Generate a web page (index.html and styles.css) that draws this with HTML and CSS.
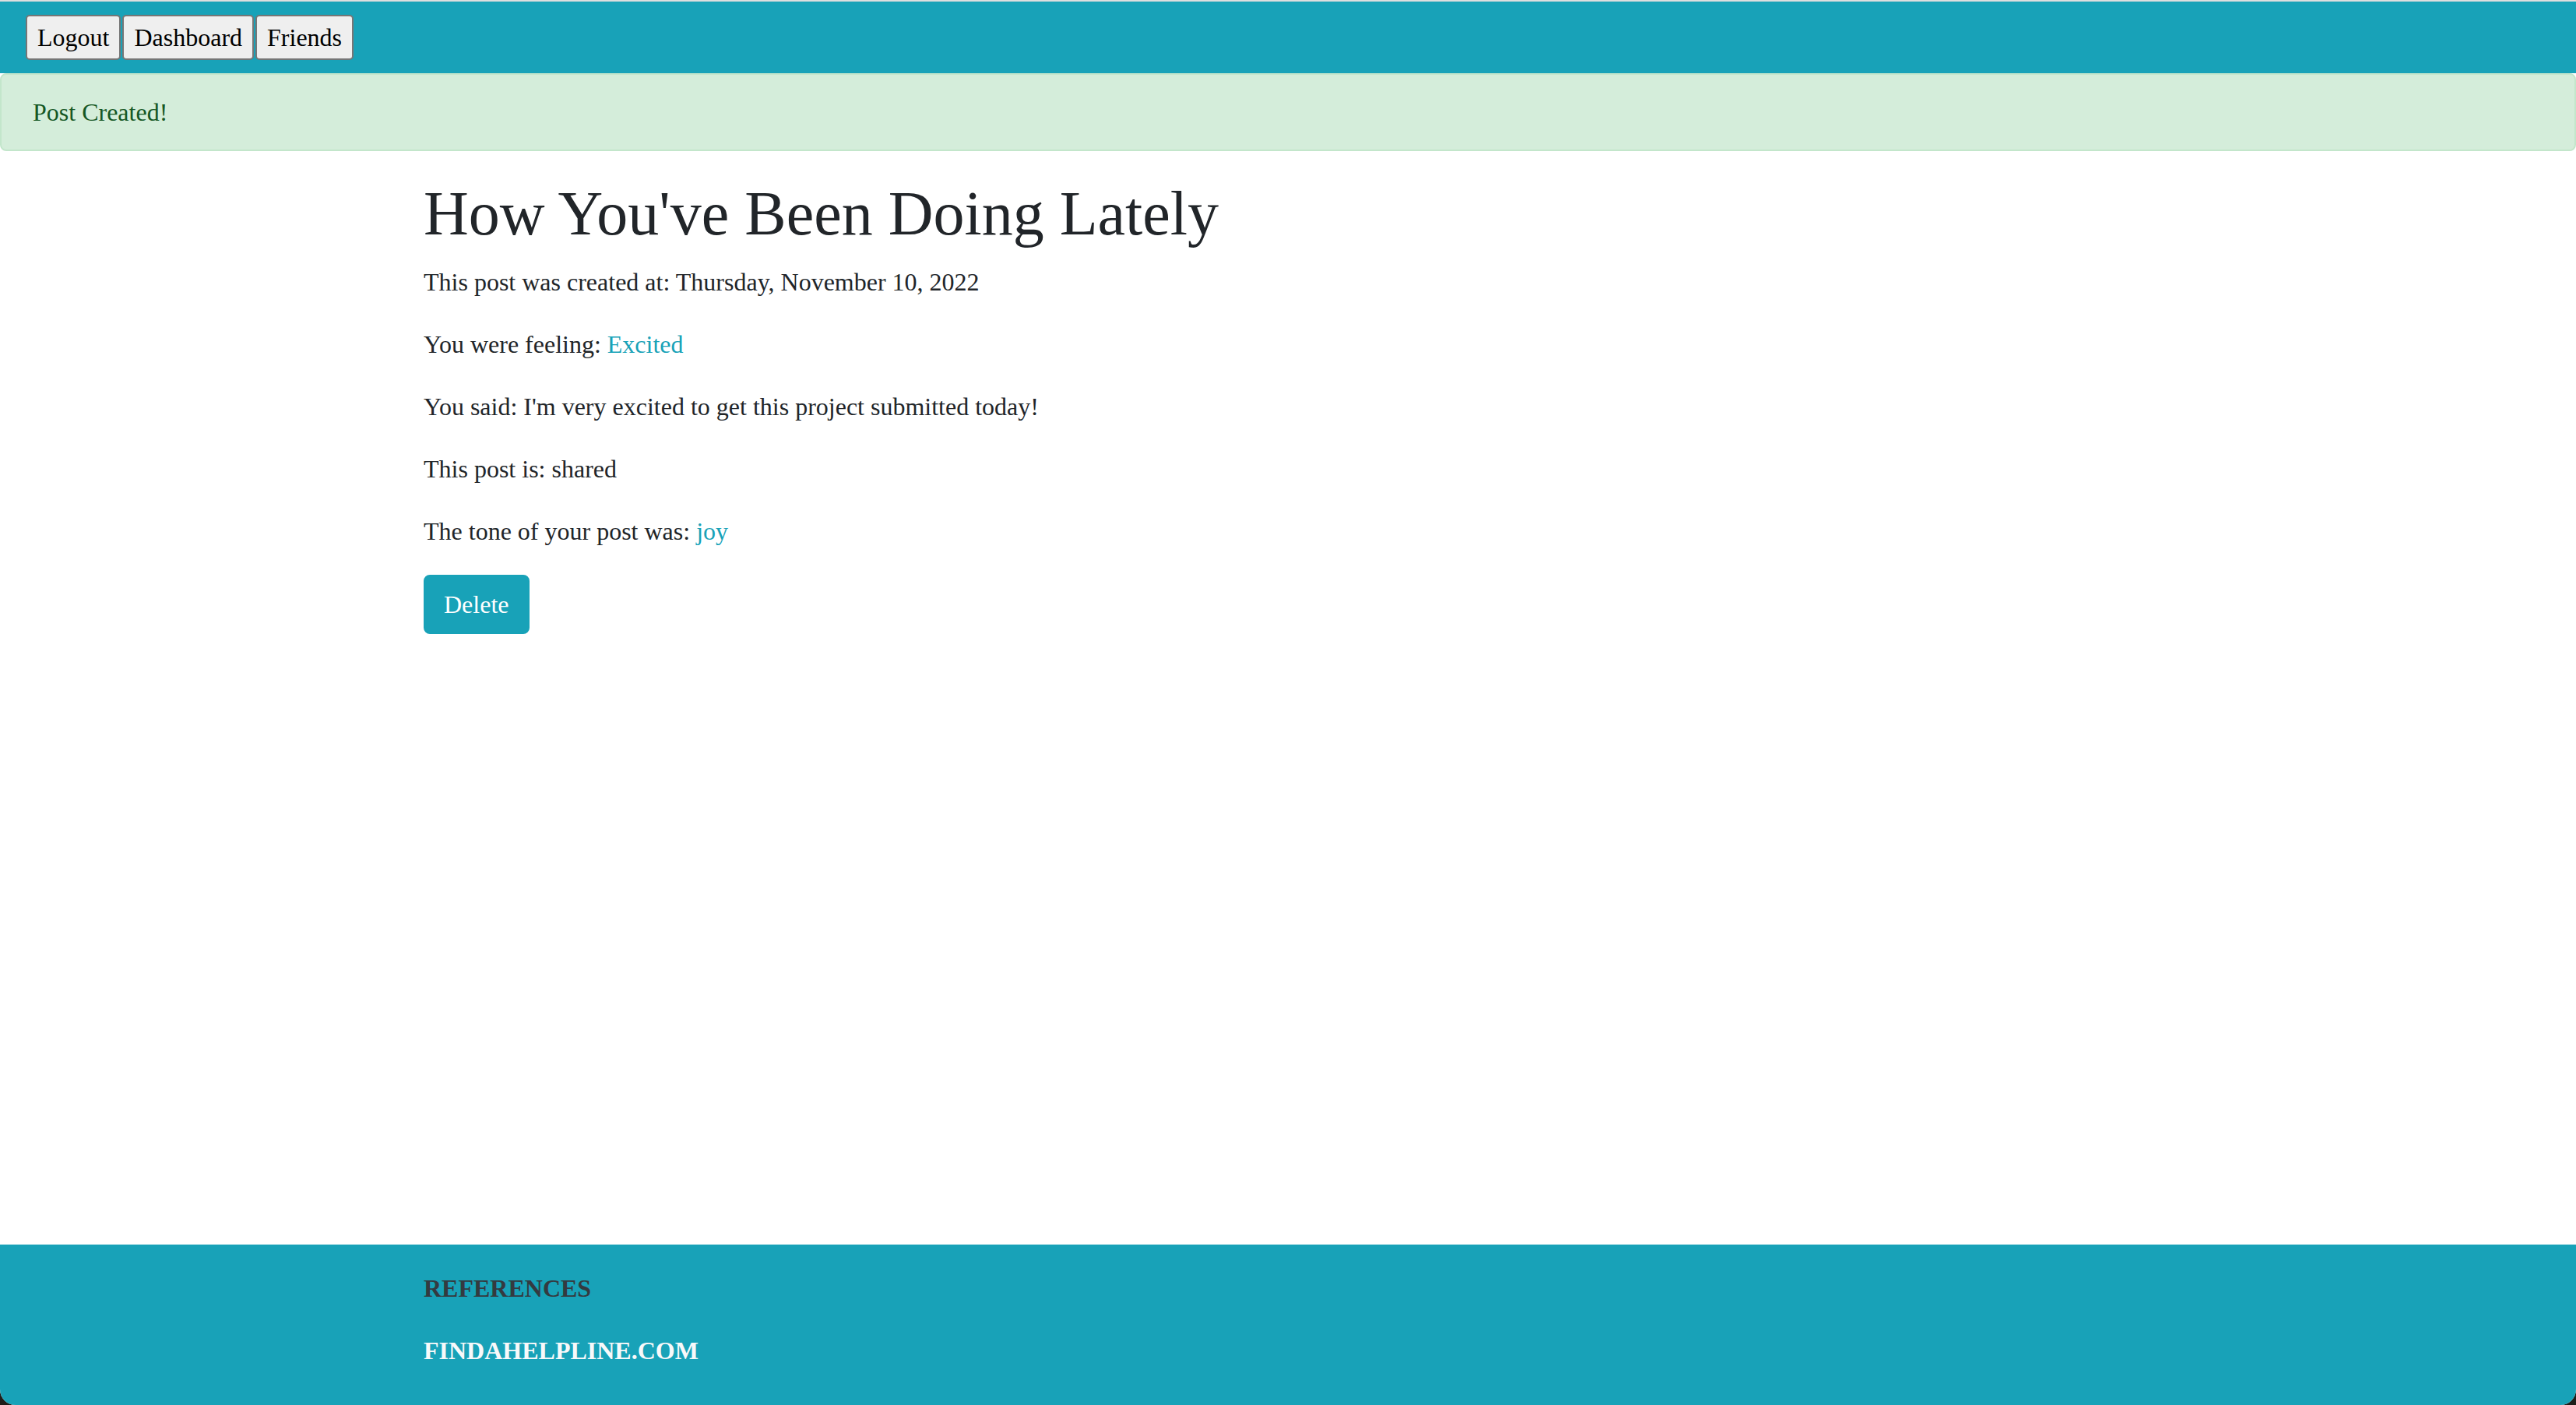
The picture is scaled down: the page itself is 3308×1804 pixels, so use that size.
FILE: index.html
```html
<!DOCTYPE html>
<html lang="en">
<head>
<meta charset="utf-8">
<title>How You've Been Doing Lately</title>
<link rel="stylesheet" href="styles.css">
</head>
<body>
<div class="window">
  <nav class="navbar">
    <button class="nav-btn" type="button">Logout</button>
    <button class="nav-btn" type="button">Dashboard</button>
    <button class="nav-btn" type="button">Friends</button>
  </nav>
  <div class="alert">Post Created!</div>
  <main class="container main">
    <h1 class="title">How You've Been Doing Lately</h1>
    <p class="line">This post was created at: Thursday, November 10, 2022</p>
    <p class="line">You were feeling: <span class="accent">Excited</span></p>
    <p class="line">You said: I'm very excited to get this project submitted today!</p>
    <p class="line">This post is: shared</p>
    <p class="line">The tone of your post was: <span class="accent">joy</span></p>
    <button class="btn-delete" type="button">Delete</button>
  </main>
  <footer class="footer">
    <div class="container">
      <p class="foot-head">REFERENCES</p>
      <p class="foot-link">FINDAHELPLINE.COM</p>
    </div>
  </footer>
</div>
</body>
</html>
```

FILE: styles.css
```css
html, body {
  margin: 0;
  padding: 0;
  background: #1f1e1a;
  height: 100%;
  overflow: hidden;
}

.window {
  box-sizing: border-box;
  height: 100vh;
  border-top: 2px solid #dedede;
  background: #ffffff;
  display: flex;
  flex-direction: column;
  border-bottom-left-radius: 20px;
  border-bottom-right-radius: 20px;
  overflow: hidden;
  font-family: "Liberation Serif", "Times New Roman", serif;
  font-size: 32px;
  line-height: 48px;
  color: #212529;
}

.navbar {
  background: #18a2b8;
  height: 92px;
  flex: none;
  box-sizing: border-box;
  padding: 0 0 0 33px;
  display: flex;
  align-items: center;
  gap: 2px;
}

.nav-btn {
  font-family: inherit;
  font-size: 32px;
  line-height: 48px;
  color: #000;
  background: #efefef;
  border: 2px solid #767676;
  border-radius: 5px;
  padding: 3px 13px;
  margin: 0;
  height: 58px;
}

.alert {
  flex: none;
  background: #d4edda;
  border: 2px solid #c3e6cb;
  border-radius: 8px;
  color: #155724;
  padding: 24px 40px;
  margin-bottom: 32px;
}

.container {
  width: 2280px;
  box-sizing: border-box;
  padding: 0 30px;
  margin: 0 auto;
}

.main {
  flex: 1;
}

.title {
  font-size: 80px;
  line-height: 96px;
  font-weight: 400;
  margin: 0 0 16px;
  color: #212529;
}

.line {
  margin: 0 0 32px;
}

.accent {
  color: #18a2b8;
}

.btn-delete {
  font-family: inherit;
  font-size: 32px;
  line-height: 48px;
  color: #fff;
  background: #18a2b8;
  border: 2px solid #18a2b8;
  border-radius: 8px;
  padding: 12px 24px;
  margin: 0;
}

.footer {
  flex: none;
  background: #18a2b8;
  padding: 32px 0 14px;
}

.footer p {
  margin: 0 0 32px;
  font-weight: 700;
}

.foot-head {
  color: #343a40;
}

.foot-link {
  color: #f8f9fa;
}
```
